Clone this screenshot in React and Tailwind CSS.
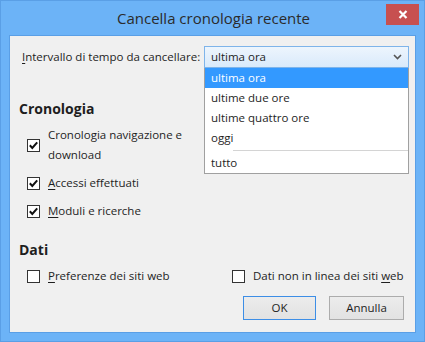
import React from "react";

const font = { fontFamily: '"Open Sans", "Noto Sans", sans-serif' };

function Check({ checked }) {
  return (
    <div className="w-[13px] h-[13px] border border-[#333333] bg-white flex items-center justify-center shrink-0">
      {checked && (
        <svg width="11" height="11" viewBox="0 0 11 11">
          <path d="M1.8 5.3 L4.3 8 L9.2 2.3" fill="none" stroke="#111" strokeWidth="2" />
        </svg>
      )}
    </div>
  );
}

function U({ children }) {
  return <span className="underline underline-offset-2">{children}</span>;
}

export default function App() {
  return (
    <div
      className="w-[425px] h-[342px] bg-[#6cb3f7] border border-[#5a9fe6] flex flex-col px-[8px] pb-[8px] text-[11.5px] text-[#1e1e1e] whitespace-nowrap"
      style={font}
    >
      <div className="h-[34px] relative flex items-center justify-center shrink-0">
        <span className="text-[15px] text-[#2b2b2b] ml-[2px]">Cancella cronologia recente</span>
        <div className="absolute right-[-3px] top-[3px] w-[33px] h-[21px] bg-[#c75050] flex items-center justify-center">
          <svg width="10" height="9" viewBox="0 0 10 9">
            <path d="M1.5 1 L8.5 8 M8.5 1 L1.5 8" stroke="white" strokeWidth="2.2" />
          </svg>
        </div>
      </div>
      <div className="flex-1 bg-[#f0f0f0] border border-[#5a9fe6] pl-[9px] flex flex-col">
        <div className="mt-[10px] h-[22px] flex items-center">
          <div className="w-[185px] pl-[3px]">
            <U>I</U>ntervallo di tempo da cancellare:
          </div>
          <div className="relative w-[205px] h-[22px]">
            <div className="h-full border border-[#7eb4ea] bg-gradient-to-b from-[#edf5fd] to-[#d9eafb] flex items-center pl-[6px] pr-[6px] justify-between">
              <span>ultima ora</span>
              <svg width="9" height="6" viewBox="0 0 9 6">
                <path d="M1 1 L4.5 4.5 L8 1" fill="none" stroke="#555" strokeWidth="1.6" />
              </svg>
            </div>
            <div className="absolute left-0 top-full w-full bg-white border border-[#a0a0a0] border-t-0 z-10 flex flex-col">
              <div className="h-[20px] bg-[#3399ff] text-white flex items-center pl-[6px]">ultima ora</div>
              <div className="h-[20px] flex items-center pl-[6px]">ultime due ore</div>
              <div className="h-[20px] flex items-center pl-[6px]">ultime quattro ore</div>
              <div className="h-[20px] flex items-center pl-[6px]">oggi</div>
              <div className="h-[5px] flex items-center pl-[28px]">
                <div className="h-px w-full bg-[#d4d4d4]" />
              </div>
              <div className="h-[20px] flex items-center pl-[6px]">tutto</div>
            </div>
          </div>
        </div>

        <div className="mt-[30px] h-[20px] flex items-center text-[14px] font-bold">Cronologia</div>

        <div className="mt-[7px] ml-[8px] flex items-center gap-[8px]">
          <Check checked />
          <div className="leading-[20px]">
            Cronologia navigazione e
            <br />
            download
          </div>
        </div>
        <div className="mt-[8px] ml-[8px] h-[20px] flex items-center gap-[8px]">
          <Check checked />
          <span>
            <U>A</U>ccessi effettuati
          </span>
        </div>
        <div className="mt-[8px] ml-[8px] h-[20px] flex items-center gap-[8px]">
          <Check checked />
          <span>
            <U>M</U>oduli e ricerche
          </span>
        </div>

        <div className="mt-[18px] h-[20px] flex items-center text-[14px] font-bold">Dati</div>

        <div className="mt-[7px] ml-[8px] h-[20px] flex items-center">
          <div className="w-[205px] flex items-center gap-[8px]">
            <Check />
            <span>
              <U>P</U>referenze dei siti web
            </span>
          </div>
          <div className="flex items-center gap-[8px]">
            <Check />
            <span>
              Dati non in linea dei siti <U>w</U>eb
            </span>
          </div>
        </div>

        <div className="mt-[10px] flex justify-end gap-[13px] pr-[11px]">
          <div className="w-[73px] h-[24px] border border-[#3d8ee6] bg-gradient-to-b from-[#ececec] to-[#e2e2e2] flex items-center justify-center">
            OK
          </div>
          <div className="w-[75px] h-[24px] border border-[#acacac] bg-gradient-to-b from-[#ececec] to-[#e2e2e2] flex items-center justify-center">
            Annulla
          </div>
        </div>
      </div>
    </div>
  );
}
